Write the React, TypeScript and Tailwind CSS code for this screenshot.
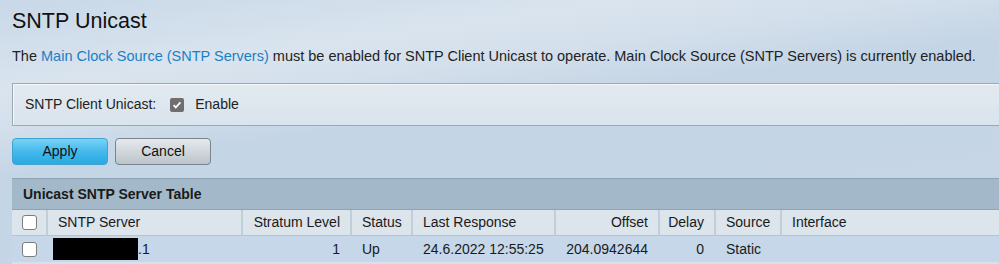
import React from "react";

const Check = ({ checked = false }: { checked?: boolean }) =>
  checked ? (
    <span className="inline-flex h-[14px] w-[14px] items-center justify-center rounded-[2px] bg-[#6f6f6f]">
      <svg viewBox="0 0 14 14" className="h-[12px] w-[12px]">
        <path d="M3 7.2l2.6 2.6L11 4" fill="none" stroke="#fff" strokeWidth="2" />
      </svg>
    </span>
  ) : (
    <span className="inline-block h-[15px] w-[15px] rounded-[3px] border border-[#7d7d7d] bg-white" />
  );

const cols = [
  { label: "SNTP Server", w: "w-[195px]", align: "text-left" },
  { label: "Stratum Level", w: "w-[109px]", align: "text-right" },
  { label: "Status", w: "w-[61px]", align: "text-left" },
  { label: "Last Response", w: "w-[143px]", align: "text-left" },
  { label: "Offset", w: "w-[104px]", align: "text-right" },
  { label: "Delay", w: "w-[56px]", align: "text-right" },
  { label: "Source", w: "w-[66px]", align: "text-left" },
  { label: "Interface", w: "flex-1", align: "text-left" },
];

const row = ["", "1", "Up", "24.6.2022 12:55:25", "204.0942644", "0", "Static", ""];

export default function App() {
  return (
    <div className="h-[264px] w-[999px] overflow-hidden bg-[linear-gradient(172deg,#c8d8e8_0%,#d9e4ee_22%,#d3dfeb_32%,#c4d5e6_44%,#c6d6e6_100%)] font-['Liberation_Sans',Arial,sans-serif] text-[14px] text-[#1a1a1a]">
      <div className="pl-[12px] pt-[9px]">
        <h1 className="text-[21.5px] leading-[24px] text-[#111]">SNTP Unicast</h1>
        <p className="mt-[13px] text-[14.5px] leading-[20px] text-[#222]">
          The <span className="text-[#1b7fc4]">Main Clock Source (SNTP Servers)</span> must be enabled for SNTP Client
          Unicast to operate. Main Clock Source (SNTP Servers) is currently enabled.
        </p>

        <div className="mt-[17px] flex h-[43px] items-center border border-r-0 border-[#9ea8b1] bg-[linear-gradient(180deg,#e2e9f0,#dae4ed)] pl-[12px] shadow-[inset_1px_1px_0_#f4f7fa]">
          <span className="text-[#222]">SNTP Client Unicast:</span>
          <span className="ml-[14px] flex items-center">
            <Check checked />
          </span>
          <span className="ml-[11px] text-[#222]">Enable</span>
        </div>

        <div className="mt-[12px] flex gap-[7px]">
          <button className="h-[27px] w-[96px] rounded-[4px] border border-[#3ea3d3] bg-[linear-gradient(180deg,#79d3f5_0%,#44b9ec_50%,#2aa9e2_100%)] text-[14px] text-[#111]">
            Apply
          </button>
          <button className="h-[27px] w-[96px] rounded-[4px] border border-[#7b838b] bg-[linear-gradient(180deg,#e6e9ec_0%,#ccd3d9_60%,#bcc4cb_100%)] text-[14px] text-[#111]">
            Cancel
          </button>
        </div>

        <div className="mt-[13px]">
          <div className="flex h-[31px] items-center border-t border-[#8ea3b3] bg-[#a3b9c9] pl-[11px] font-bold text-[#1a1a1a]">
            Unicast SNTP Server Table
          </div>
          <div className="flex h-[26px] items-stretch border-t border-[#8ea3b3] bg-[#dce4ec]">
            <div className="flex w-[36px] items-center justify-center border-r-2 border-[#c2cfda]">
              <Check />
            </div>
            {cols.map((c, i) => (
              <div
                key={c.label}
                className={`${c.w} flex items-center px-[10px] ${c.align === "text-right" ? "justify-end" : "justify-start"} ${i < cols.length - 1 ? "border-r-2 border-[#c2cfda]" : ""}`}
              >
                {c.label}
              </div>
            ))}
          </div>
          <div className="flex h-[27px] items-stretch border-t border-[#b3c3d1] bg-[#c5d7e9]">
            <div className="flex w-[36px] items-center justify-center border-r-2 border-transparent">
              <Check />
            </div>
            {cols.map((c, i) => (
              <div
                key={c.label}
                className={`${c.w} flex items-center ${c.align === "text-right" ? "justify-end px-[10px]" : "justify-start px-[10px]"} ${i < cols.length - 1 ? "border-r-2 border-transparent" : ""}`}
              >
                {i === 0 ? (
                  <span className="-ml-[5px] flex items-end">
                    <span className="inline-block h-[22px] w-[85px] bg-black" />
                    <span>.1</span>
                  </span>
                ) : (
                  row[i]
                )}
              </div>
            ))}
          </div>
          <div className="h-[4px] bg-[#d6e1ec]" />
        </div>
      </div>
    </div>
  );
}
